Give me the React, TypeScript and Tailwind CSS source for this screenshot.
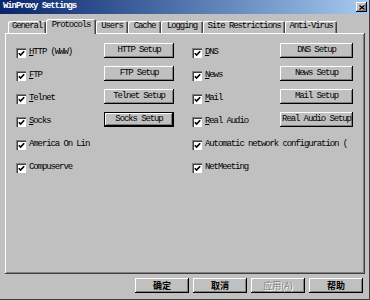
import React from "react";

type Row = {
  label: string;
  underline?: boolean;
  button?: string;
  focused?: boolean;
};

const LEFT_ROWS: Row[] = [
  { label: "HTTP (WWW)", underline: true, button: "HTTP Setup" },
  { label: "FTP", underline: true, button: "FTP Setup" },
  { label: "Telnet", underline: true, button: "Telnet Setup" },
  { label: "Socks", underline: true, button: "Socks Setup", focused: true },
  { label: "America On Lin" },
  { label: "Compuserve" },
];

const RIGHT_ROWS: Row[] = [
  { label: "DNS", underline: true, button: "DNS Setup" },
  { label: "News", underline: true, button: "News Setup" },
  { label: "Mail", underline: true, button: "Mail Setup" },
  { label: "Real Audio", underline: true, button: "Real Audio Setup" },
  { label: "Automatic network configuration (" },
  { label: "NetMeeting" },
];

const TABS = [
  { name: "General", width: "w-[38px]" },
  { name: "Protocols", width: "w-[50px]", active: true },
  { name: "Users", width: "w-[32px]" },
  { name: "Cache", width: "w-[33px]" },
  { name: "Logging", width: "w-[42px]" },
  { name: "Site Restrictions", width: "w-[82px]" },
  { name: "Anti-Virus", width: "w-[52px]" },
];

const bevel =
  "bg-[#c0c0c0] shadow-[inset_-1px_-1px_#000,inset_1px_1px_#fff,inset_-2px_-2px_#808080]";

function Checkbox() {
  return (
    <span className="flex h-[10px] w-[10px] shrink-0 items-center justify-center bg-white shadow-[inset_1px_1px_#808080,inset_2px_2px_#404040,inset_-1px_-1px_#fff]">
      <svg width="7" height="7" viewBox="0 0 7 7" className="mt-[1px] ml-[1px]">
        <path d="M0.8 3.2 L2.6 5 L6.2 1.2" fill="none" stroke="#000" strokeWidth="1.6" />
      </svg>
    </span>
  );
}

function SetupButton({ text, width, focused }: { text: string; width: string; focused?: boolean }) {
  return (
    <span
      className={`mb-[4px] flex h-[15px] ${width} shrink-0 items-center justify-center ${bevel} ${
        focused ? "border border-black" : ""
      }`}
    >
      {text}
    </span>
  );
}

function OptionRow({ row, buttonWidth }: { row: Row; buttonWidth: string }) {
  return (
    <div className="flex h-[23px] items-center">
      <Checkbox />
      <span className={`ml-[3px] whitespace-nowrap ${row.button ? "w-[75px]" : ""}`}>
        {row.underline ? (
          <>
            <span className="underline underline-offset-[1px]">{row.label.charAt(0)}</span>
            {row.label.slice(1)}
          </>
        ) : (
          row.label
        )}
      </span>
      {row.button ? <SetupButton text={row.button} width={buttonWidth} focused={row.focused} /> : null}
    </div>
  );
}

export default function App() {
  return (
    <div className="flex h-[300px] w-[370px] flex-col overflow-hidden border-r border-b border-[#404040] bg-[#c0c0c0] font-['Liberation_Mono',monospace] text-[9px] tracking-[-1.1px] text-black">
      <div className="flex h-[14px] shrink-0 items-center justify-between bg-gradient-to-r from-[#0a246a] to-[#a6caf0] pl-[3px] pr-[2px]">
        <span className="font-bold text-white">WinProxy Settings</span>
        <span className={`flex h-[10px] w-[11px] items-center justify-center ${bevel}`}>
          <svg width="6" height="5" viewBox="0 0 6 5">
            <path d="M0.5 0.5 L5.5 4.5 M5.5 0.5 L0.5 4.5" stroke="#000" strokeWidth="1.3" />
          </svg>
        </span>
      </div>

      <div className="mt-[5px] flex h-[14px] items-end pl-[8px]">
        {TABS.map((tab) =>
          tab.active ? (
            <div
              key={tab.name}
              className={`relative z-10 -mb-px flex h-[15px] ${tab.width} items-center justify-center rounded-t-[2px] bg-[#c0c0c0] pb-[2px] shadow-[inset_1px_1px_#fff,inset_-1px_0_#404040,inset_-2px_0_#808080]`}
            >
              {tab.name}
            </div>
          ) : (
            <div
              key={tab.name}
              className={`flex h-[12px] ${tab.width} items-center justify-center rounded-t-[2px] shadow-[inset_1px_1px_#fff,inset_-1px_0_#404040,inset_-2px_0_#808080]`}
            >
              {tab.name}
            </div>
          )
        )}
      </div>

      <div className="ml-[5px] grid h-[241px] w-[360px] grid-cols-[176px_1fr] content-start pt-[8px] pl-[11px] shadow-[inset_-1px_-1px_#404040,inset_1px_1px_#fff,inset_-2px_-2px_#808080]">
        <div className="flex flex-col">
          {LEFT_ROWS.map((row) => (
            <OptionRow key={row.label} row={row} buttonWidth="w-[70px]" />
          ))}
        </div>
        <div className="flex flex-col">
          {RIGHT_ROWS.map((row) => (
            <OptionRow key={row.label} row={row} buttonWidth="w-[73px]" />
          ))}
        </div>
      </div>

      <div className="flex justify-end gap-[4px] pt-[4px] pr-[6px] font-['Noto_Sans_CJK_SC',sans-serif] text-[9px] font-bold tracking-normal">
        {["确定", "取消", "应用(A)", "帮助"].map((label) => (
          <span
            key={label}
            className={`flex h-[15px] w-[54px] items-center justify-center leading-none ${bevel} ${
              label === "应用(A)" ? "font-normal text-[#808080] [text-shadow:1px_1px_#fff]" : ""
            }`}
          >
            {label}
          </span>
        ))}
      </div>
    </div>
  );
}
